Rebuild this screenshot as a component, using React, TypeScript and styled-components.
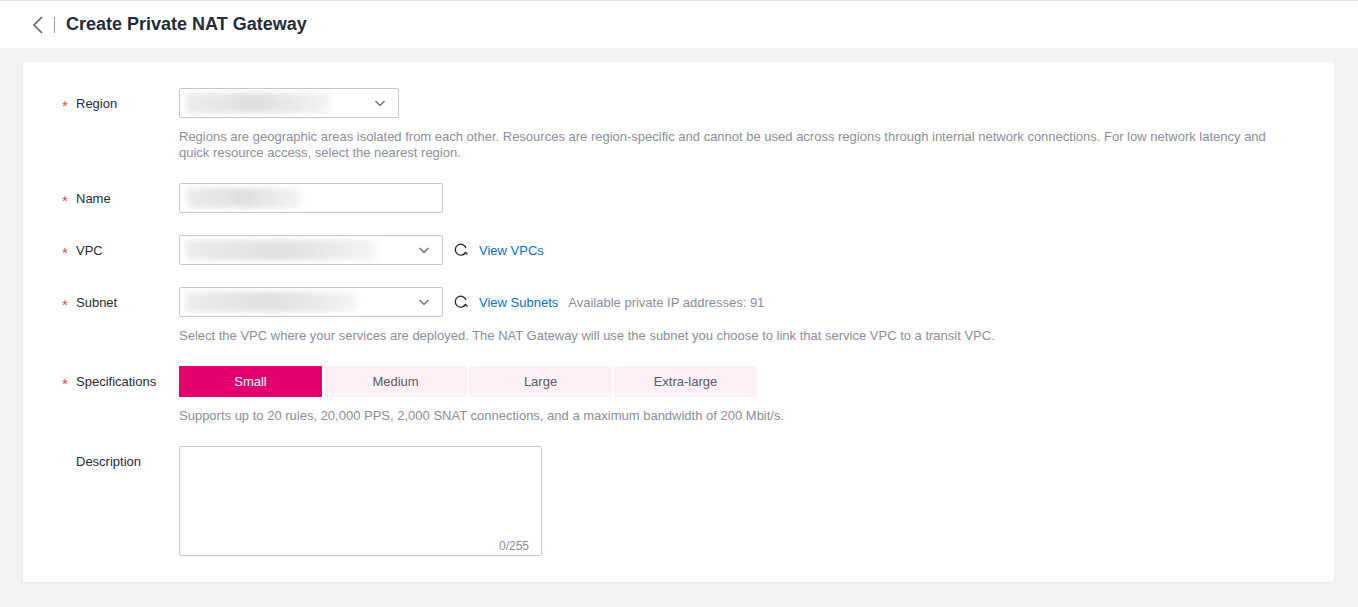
import styled, { createGlobalStyle } from 'styled-components'

const Global = createGlobalStyle`
  body { margin: 0; background: #f2f3f5; font-family: "Liberation Sans", Arial, sans-serif; }
`

const Header = styled.div`
  height: 48px;
  background: #fff;
  border-top: 1px solid #e5e5e5;
  box-sizing: border-box;
  display: flex;
  align-items: center;
  padding-left: 32px;
`

const Divider = styled.span`
  width: 1px;
  height: 16px;
  background: #999;
  margin: 0 11px 0 10px;
`

const Title = styled.h1`
  margin: 0;
  font-size: 18px;
  font-weight: bold;
  color: #252b3a;
`

const Page = styled.div`
  padding: 14px 24px 24px 23px;
`

const Card = styled.div`
  background: #fff;
  border-radius: 2px;
  padding: 26px 0 26px 39px;
  box-shadow: 0 1px 3px rgba(0, 0, 0, 0.06);
`

const Row = styled.div<{ $last?: boolean }>`
  display: flex;
  align-items: flex-start;
  margin-bottom: ${p => (p.$last ? 0 : 22)}px;
`

const Label = styled.div`
  width: 117px;
  height: 30px;
  flex-shrink: 0;
  font-size: 13px;
  color: #252b3a;
  display: flex;
  align-items: center;
`

const Star = styled.span<{ $hide?: boolean }>`
  color: #e5483a;
  width: 14px;
  font-size: 15px;
  padding-top: 4px;
  visibility: ${p => (p.$hide ? 'hidden' : 'visible')};
`

const Body = styled.div`
  flex: 1;
  padding-right: 40px;
`

const Line = styled.div`
  display: flex;
  align-items: center;
  gap: 10px;
  font-size: 13px;
`

const Field = styled.div<{ $w: number; $h?: number }>`
  position: relative;
  width: ${p => p.$w}px;
  height: ${p => p.$h ?? 30}px;
  border: 1px solid #c7c9cc;
  border-radius: 2px;
  box-sizing: border-box;
  overflow: hidden;
  display: flex;
  align-items: center;
  justify-content: flex-end;
  padding-right: 12px;
`

const Blur = styled.div<{ $w: number }>`
  position: absolute;
  left: 6px;
  top: 4px;
  bottom: 4px;
  width: ${p => p.$w}px;
  background: linear-gradient(90deg, #ececec, #dedede 50%, #f4f4f4);
  filter: blur(3px);
`

const Help = styled.div`
  margin-top: 11px;
  font-size: 13px;
  line-height: 16px;
  color: #8a8e99;
`

const Link = styled.span`
  color: #0073c4;
`

const Muted = styled.span`
  color: #8a8e99;
`

const Specs = styled.div`
  display: flex;
  gap: 2px;
`

const Spec = styled.div<{ $on?: boolean }>`
  width: 143px;
  height: 31px;
  display: flex;
  align-items: center;
  justify-content: center;
  font-size: 13px;
  background: ${p => (p.$on ? '#e3006f' : '#fdf0f6')};
  color: ${p => (p.$on ? '#fff' : '#575d6c')};
`

const Area = styled(Field)`
  align-items: flex-end;
  padding: 0 12px 2px 0;
  font-size: 12px;
  color: #8a8e99;
`

const Chevron = () => (
  <svg width="12" height="12" viewBox="0 0 12 12" fill="none" stroke="#575d6c" strokeWidth="1.2">
    <path d="M1.5 4l4.5 4.5L10.5 4" />
  </svg>
)

const Refresh = () => (
  <svg width="16" height="16" viewBox="0 0 16 16" fill="none" stroke="#252b3a" strokeWidth="1.3">
    <path d="M12.5 10.5A5.5 5.5 0 1 1 13 6" />
    <path d="M10.5 12.5l2-2 2 2" />
  </svg>
)

const Select = ({ w, blur }: { w: number; blur: number }) => (
  <Field $w={w}>
    <Blur $w={blur} />
    <Chevron />
  </Field>
)

export default function App() {
  return (
    <>
      <Global />
      <Header>
        <svg width="12" height="20" viewBox="0 0 12 20" fill="none" stroke="#575d6c" strokeWidth="1.6">
          <path d="M10 2L2 10l8 8" />
        </svg>
        <Divider />
        <Title>Create Private NAT Gateway</Title>
      </Header>
      <Page>
        <Card>
          <Row>
            <Label><Star>*</Star>Region</Label>
            <Body>
              <Select w={220} blur={144} />
              <Help>
                Regions are geographic areas isolated from each other. Resources are region-specific and cannot be used across regions through internal network connections. For low network latency and quick resource access, select the nearest region.
              </Help>
            </Body>
          </Row>
          <Row>
            <Label><Star>*</Star>Name</Label>
            <Body>
              <Field $w={264}><Blur $w={115} /></Field>
            </Body>
          </Row>
          <Row>
            <Label><Star>*</Star>VPC</Label>
            <Body>
              <Line>
                <Select w={264} blur={190} />
                <Refresh />
                <Link>View VPCs</Link>
              </Line>
            </Body>
          </Row>
          <Row>
            <Label><Star>*</Star>Subnet</Label>
            <Body>
              <Line>
                <Select w={264} blur={170} />
                <Refresh />
                <Link>View Subnets</Link>
                <Muted>Available private IP addresses: 91</Muted>
              </Line>
              <Help>Select the VPC where your services are deployed. The NAT Gateway will use the subnet you choose to link that service VPC to a transit VPC.</Help>
            </Body>
          </Row>
          <Row>
            <Label><Star>*</Star>Specifications</Label>
            <Body>
              <Specs>
                <Spec $on>Small</Spec>
                <Spec>Medium</Spec>
                <Spec>Large</Spec>
                <Spec>Extra-large</Spec>
              </Specs>
              <Help>Supports up to 20 rules, 20,000 PPS, 2,000 SNAT connections, and a maximum bandwidth of 200 Mbit/s.</Help>
            </Body>
          </Row>
          <Row $last>
            <Label><Star $hide>*</Star>Description</Label>
            <Body>
              <Area $w={363} $h={110}>0/255</Area>
            </Body>
          </Row>
        </Card>
      </Page>
    </>
  )
}
